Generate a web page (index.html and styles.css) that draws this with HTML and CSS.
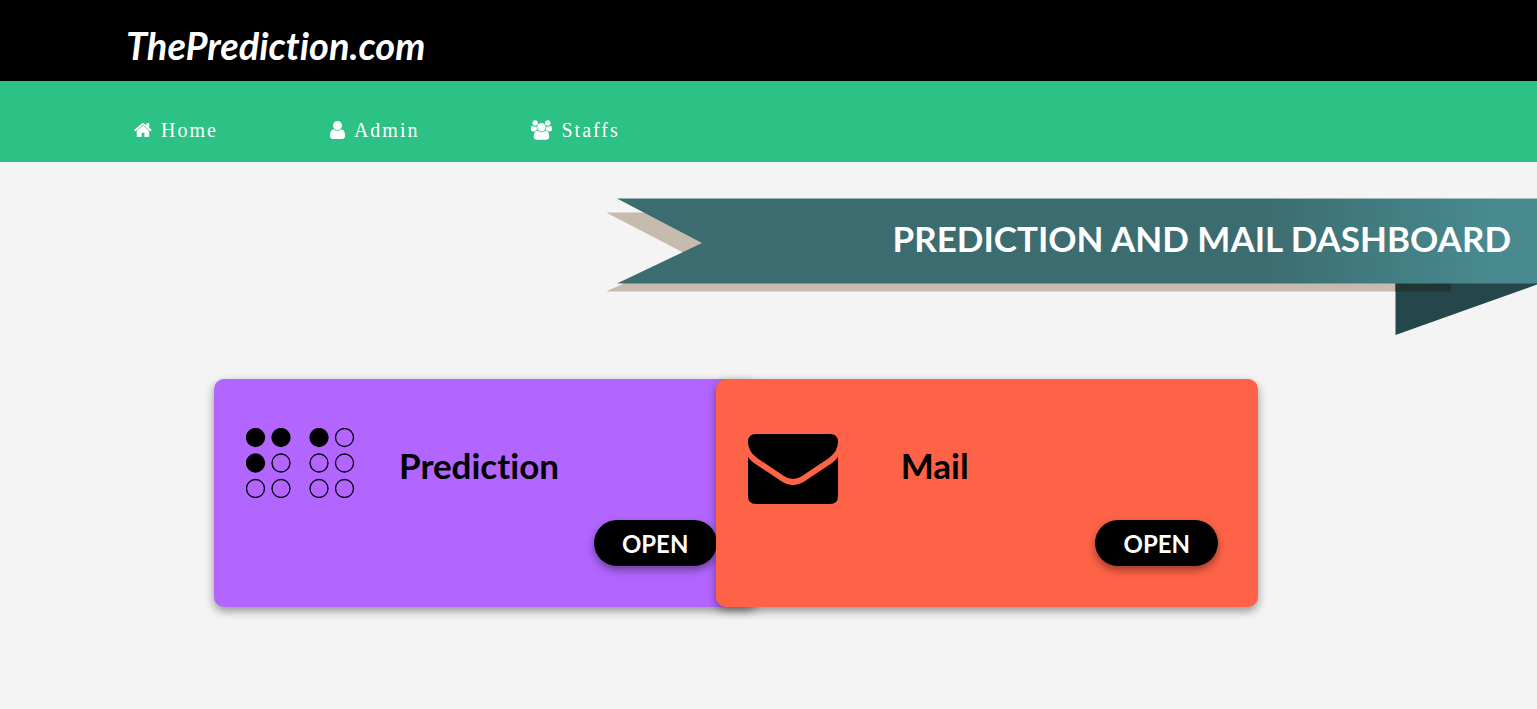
FILE: index.html
```html
<!DOCTYPE html>
<html lang="en">
<head>
<meta charset="utf-8">
<meta name="viewport" content="width=device-width, initial-scale=1">
<title>ThePrediction.com</title>
<link rel="stylesheet" href="styles.css">
</head>
<body>
<header class="topbar"><a class="brand" href="#">ThePrediction.com</a></header>
<nav class="nav">
  <a class="nav-link" href="#"><svg class="icon icon-home" viewBox="64 0 1664 1792" aria-hidden="true"><path d="M1472 992v480q0 26-19 45t-45 19h-384v-384h-256v384h-384q-26 0-45-19t-19-45v-480q0-1 .5-3t.5-3l575-474 575 474q1 2 1 6zm223-69l-62 74q-8 9-21 11h-3q-13 0-21-7l-692-577-692 577q-12 8-24 7-13-2-21-11l-62-74q-8-10-7-23.500t11-21.500l719-599q32-26 76-26t76 26l244 204v-195q0-14 9-23t23-9h192q14 0 23 9t9 23v408l219 182q10 8 11 21.500t-7 23.500z"/></svg><span>Home</span></a>
  <a class="nav-link" href="#"><svg class="icon icon-user" viewBox="256 0 1280 1536" aria-hidden="true"><path transform="translate(0 -128)" d="M1536 1399q0 109-62.500 187t-150.500 78h-854q-88 0-150.500-78t-62.500-187q0-85 8.500-160.500t31.500-152 58.500-131 94-89 134.500-34.500q131 128 313 128t313-128q76 0 134.500 34.500t94 89 58.500 131 31.500 152 8.500 160.500zm-256-887q0 159-112.500 271.500t-271.500 112.500-271.500-112.500-112.500-271.500 112.500-271.500 271.500-112.500 271.500 112.500 112.500 271.500z"/></svg><span>Admin</span></a>
  <a class="nav-link" href="#"><svg class="icon icon-users" viewBox="0 0 1920 1792" aria-hidden="true"><path d="M593 896q-162 5-265 128h-134q-82 0-138-40.500t-56-118.500q0-353 124-353 6 0 43.500 21t97.500 42.500 119 21.500q67 0 133-23-5 37-5 66 0 139 81 256zm1071 637q0 120-73 189.500t-194 69.500h-874q-121 0-194-69.500t-73-189.500q0-53 3.500-103.500t14-109 26.500-108.500 43-97.500 62-81 85.500-53.500 111.500-20q10 0 43 21.500t73 48 107 48 135 21.500 135-21.500 107-48 73-48 43-21.500q61 0 111.500 20t85.500 53.500 62 81 43 97.500 26.500 108.500 14 109 3.500 103.500zm-1024-1277q0 106-75 181t-181 75-181-75-75-181 75-181 181-75 181 75 75 181zm704 384q0 159-112.500 271.500t-271.500 112.500-271.500-112.500-112.500-271.500 112.500-271.500 271.500-112.500 271.500 112.500 112.500 271.500zm576 225q0 78-56 118.500t-138 40.500h-134q-103-123-265-128 81-117 81-256 0-29-5-66 66 23 133 23 59 0 119-21.500t97.500-42.500 43.500-21q124 0 124 353zm-128-609q0 106-75 181t-181 75-181-75-75-181 75-181 181-75 181 75 75 181z"/></svg><span>Staffs</span></a>
</nav>
<main>
  <section class="banner">
    <svg class="ribbon" viewBox="607 198 930 137" aria-hidden="true">
      <defs>
        <linearGradient id="band" gradientUnits="userSpaceOnUse" x1="1260" y1="0" x2="1490" y2="0"><stop offset="0" stop-color="#3b6c70"/><stop offset="1" stop-color="#488a8f"/></linearGradient>
      </defs>
      <path fill="#c7baaf" d="M606 212.500H1396V291.500H606L688 255Z"/>
      <path fill="#25464a" d="M1395.500 283H1537V284.500L1395.500 335Z"/>
      <path fill="#1f3635" d="M1395.500 283H1451V291.500H1395.500Z"/>
      <path fill="url(#band)" d="M617 198.500H1537V283.500H617L702 243Z"/>
    </svg>
    <h1 class="banner-title">PREDICTION AND MAIL DASHBOARD</h1>
  </section>
  <section class="cards">
    <article class="card card-prediction">
      <div class="card-head">
        <div class="card-icon"><svg class="braille" viewBox="0 0 110 70" aria-hidden="true">
          <g stroke="#000" stroke-width="1.300" fill="none">
            <g fill="#000"><circle cx="9.500" cy="9.500" r="9"/><circle cx="35" cy="9.500" r="9"/><circle cx="73" cy="9.500" r="9"/><circle cx="9.500" cy="35" r="9"/></g>
            <circle cx="98.500" cy="9.500" r="9"/><circle cx="35" cy="35" r="9"/><circle cx="73" cy="35" r="9"/><circle cx="98.500" cy="35" r="9"/>
            <circle cx="9.500" cy="60.500" r="9"/><circle cx="35" cy="60.500" r="9"/><circle cx="73" cy="60.500" r="9"/><circle cx="98.500" cy="60.500" r="9"/>
          </g></svg></div>
        <h2 class="card-title">Prediction</h2>
      </div>
      <button class="open" type="button">OPEN</button>
    </article>
    <article class="card card-mail">
      <div class="card-head">
        <div class="card-icon"><svg class="envelope" viewBox="0 0 90 70" aria-hidden="true"><path d="M8 0H82Q90 0 90 8Q90 17 81 24L54 42Q45 48 36 42L9 24Q0 17 0 8Q0 0 8 0Z"/><path d="M0 23Q2 26 6 29L33 47Q45 55 57 47L84 29Q88 26 90 23V62Q90 70 82 70H8Q0 70 0 62Z"/></svg></div>
        <h2 class="card-title">Mail</h2>
      </div>
      <button class="open" type="button">OPEN</button>
    </article>
  </section>
</main>
</body>
</html>
```
FILE: styles.css
```css
* { box-sizing: border-box; }
body { margin: 0; background: #f4f4f4; font-family: Lato, "Open Sans", sans-serif; font-variant-ligatures: none; color: #000; }
.topbar { display: flex; align-items: center; min-height: 81px; padding: 8px 126px 0; background: #000; }
.brand { color: #fff; font-size: 38px; line-height: 48px; font-weight: 700; font-style: italic; text-decoration: none; }
.nav { display: flex; flex-wrap: wrap; align-items: center; gap: 0 112px; min-height: 81px; padding: 16px 134px 0; background: #2cc185; }
.nav-link { display: flex; align-items: center; gap: 9px; color: #fff; font-family: "Liberation Serif", serif; font-size: 20px; line-height: 24px; letter-spacing: 2px; text-decoration: none; }
.icon { height: 20px; fill: currentColor; }
.icon-home { width: 18px; }
.icon-user { width: 15px; height: 18px; }
.icon-users { width: 21px; }
.banner { position: relative; display: flex; justify-content: flex-end; min-height: 137px; margin-top: 36px; padding: 16px 26px 0; }
.ribbon { position: absolute; top: 0; right: 0; width: 930px; height: 137px; }
.banner-title { position: relative; margin: 0; color: #fff; font-size: 35px; line-height: 48px; font-weight: 700; }
.cards { display: grid; grid-template-columns: 1fr 1fr; margin: 44px 20.8% 32px 214px; }
.card { display: flex; flex-direction: column; justify-content: space-between; min-height: 228px; margin-right: -41px; padding: 46px 40px 41px 32px; border-radius: 10px; box-shadow: 0 4px 10px rgba(0, 0, 0, .4); }
.card-prediction { background: #b266ff; }
.card-mail { background: #ff6347; }
.card-head { display: flex; align-items: center; gap: 43px; }
.card-icon { display: flex; align-items: center; width: 110px; height: 80px; }
.card-prediction .card-icon { padding-bottom: 4px; }
.card-mail .card-icon { padding-top: 8px; }
.braille { width: 110px; height: 70px; }
.envelope { width: 90px; height: 70px; }
.card-title { margin: 0; font-size: 35px; line-height: 44px; font-weight: 700; }
.open { align-self: flex-end; min-width: 123px; height: 46px; padding: 0 24px; border: 0; border-radius: 23px; background: #000; color: #fff; font-family: inherit; font-size: 24px; font-weight: 700; box-shadow: 0 4px 8px rgba(0, 0, 0, .4); }
```
